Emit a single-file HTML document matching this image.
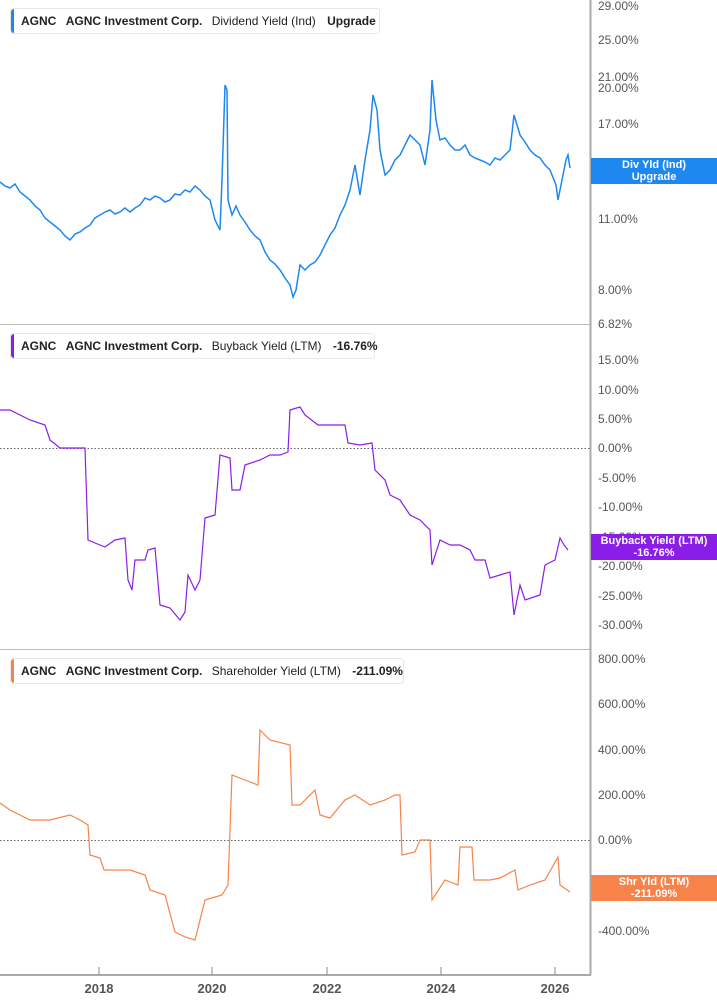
<!DOCTYPE html>
<html><head><meta charset="utf-8"><style>
body{margin:0;background:#fff;width:717px;height:1005px;overflow:hidden;font-family:"Liberation Sans",sans-serif}
svg text{font-family:"Liberation Sans",sans-serif}
.ax{font-size:12px;fill:#555}
.lg{position:absolute;left:10px;height:24px;background:#fff;border:1px solid #e8e8e8;border-radius:3px;font-size:12px;line-height:24px;color:#222;padding-left:10px;white-space:nowrap}
.lg i{position:absolute;left:0;top:0;bottom:0;width:3px;border-radius:3px 0 0 3px}
.lg b{margin-right:6px}
.lg span{margin-right:8px}
.tag{position:absolute;left:591px;width:126px;height:26px;color:#fff;font-size:11px;font-weight:bold;text-align:center;line-height:12px;padding-top:1px;box-sizing:border-box}
</style></head><body>
<svg width="717" height="1005" style="position:absolute;left:0;top:0">
<g stroke="#bbb" stroke-width="1">
<line x1="0" y1="324.5" x2="590" y2="324.5"/>
<line x1="0" y1="649.5" x2="590" y2="649.5"/>
</g>
<line x1="590.5" y1="0" x2="590.5" y2="975" stroke="#aaa" stroke-width="2"/>
<line x1="0" y1="975" x2="591" y2="975" stroke="#aaa" stroke-width="2"/>
<g stroke="#666" stroke-dasharray="1.5,2"><line x1="0" y1="448.5" x2="590" y2="448.5"/><line x1="0" y1="840.5" x2="590" y2="840.5"/></g>
<g stroke="#888"><line x1="99" y1="967" x2="99" y2="975"/><line x1="212" y1="967" x2="212" y2="975"/><line x1="327" y1="967" x2="327" y2="975"/><line x1="441" y1="967" x2="441" y2="975"/><line x1="555" y1="967" x2="555" y2="975"/></g>
<g class="ax" text-anchor="middle" style="font-size:13px;font-weight:bold">
<text x="99" y="993">2018</text><text x="212" y="993">2020</text><text x="327" y="993">2022</text><text x="441" y="993">2024</text><text x="555" y="993">2026</text></g>
<g class="ax">
<text x="598" y="10">29.00%</text><text x="598" y="44">25.00%</text><text x="598" y="81">21.00%</text><text x="598" y="92">20.00%</text><text x="598" y="128">17.00%</text><text x="598" y="171">14.00%</text><text x="598" y="223">11.00%</text><text x="598" y="294">8.00%</text><text x="598" y="328">6.82%</text>
<text x="598" y="364">15.00%</text><text x="598" y="394">10.00%</text><text x="598" y="423">5.00%</text><text x="598" y="452">0.00%</text><text x="598" y="482">-5.00%</text><text x="598" y="511">-10.00%</text><text x="598" y="541">-15.00%</text><text x="598" y="570">-20.00%</text><text x="598" y="600">-25.00%</text><text x="598" y="629">-30.00%</text>
<text x="598" y="663">800.00%</text><text x="598" y="708">600.00%</text><text x="598" y="754">400.00%</text><text x="598" y="799">200.00%</text><text x="598" y="844">0.00%</text><text x="598" y="890">-200.00%</text><text x="598" y="935">-400.00%</text>
</g>
<polyline fill="none" stroke="#1e88f0" stroke-width="1.5" points="0,182 5,186 10,188 15,184 20,192 25,196 30,200 35,206 40,210 45,218 50,222 55,226 60,230 65,236 70,240 75,234 80,232 85,228 90,225 95,218 100,215 105,212 110,210 115,214 120,212 125,208 130,212 135,208 140,205 145,198 150,200 155,196 160,198 165,202 170,200 175,194 180,195 185,190 190,192 195,186 200,190 205,196 210,200 215,220 220,230 222,180 225,85 227,90 228,200 232,215 236,206 240,215 245,222 250,230 255,236 260,240 265,252 270,260 275,264 280,270 285,278 290,285 293,297 296,290 300,265 305,270 310,265 315,262 320,255 325,245 330,235 335,228 340,215 345,205 350,190 355,165 360,195 365,160 370,130 373,95 377,110 380,150 385,175 390,170 395,160 400,155 405,145 410,135 415,140 420,145 425,165 430,130 432,80 436,120 440,140 445,138 450,145 455,150 460,150 465,145 470,155 475,158 480,160 485,162 490,165 495,158 500,160 505,155 510,150 514,115 520,135 525,142 530,150 535,155 540,158 545,165 550,170 556,185 558,200 562,180 566,160 568,155 570,168"/>
<polyline fill="none" stroke="#8a1ee8" stroke-width="1.2" points="0,410 10,410 20,415 30,420 45,425 50,440 60,448 85,448 88,540 95,543 105,547 115,540 125,538 128,580 132,590 135,560 145,560 148,550 155,548 160,605 170,608 180,620 185,612 188,575 195,590 200,580 205,518 215,515 220,455 230,458 232,490 240,490 245,465 260,460 270,455 280,455 288,452 290,410 300,407 305,415 318,425 330,425 345,425 348,443 360,445 372,443 375,470 385,480 390,495 400,500 410,515 420,520 430,530 432,565 440,540 450,545 460,545 470,550 475,560 485,560 490,578 500,575 510,572 514,615 520,585 525,600 540,595 545,565 555,560 560,538 564,545 568,550"/>
<polyline fill="none" stroke="#f7834a" stroke-width="1.2" points="0,803 10,810 30,820 50,820 70,815 80,820 88,825 90,855 100,858 104,870 130,870 145,875 150,890 165,895 175,932 185,937 195,940 205,900 222,895 228,885 232,775 245,780 258,785 260,730 270,740 290,745 292,805 300,805 315,790 320,815 330,818 345,800 355,795 370,805 385,800 395,795 400,795 402,855 415,852 420,840 430,840 432,900 445,880 458,885 460,847 472,847 474,880 490,880 500,878 515,870 518,890 530,885 545,880 558,857 560,885 570,892"/>
</svg>
<div class="lg" style="top:8px;width:358px"><i style="background:#1e88f0"></i><b>AGNC</b> <b>AGNC Investment Corp.</b> <span>Dividend Yield (Ind)</span> <b>Upgrade</b></div>
<div class="lg" style="top:333px;width:353px"><i style="background:#8a1ee8"></i><b>AGNC</b> <b>AGNC Investment Corp.</b> <span>Buyback Yield (LTM)</span> <b>-16.76%</b></div>
<div class="lg" style="top:658px;width:382px"><i style="background:#f7834a"></i><b>AGNC</b> <b>AGNC Investment Corp.</b> <span>Shareholder Yield (LTM)</span> <b>-211.09%</b></div>
<div class="tag" style="top:158px;background:#1e88f0">Div Yld (Ind)<br>Upgrade</div>
<div class="tag" style="top:534px;background:#8a1ee8">Buyback Yield (LTM)<br>-16.76%</div>
<div class="tag" style="top:875px;background:#f7834a">Shr Yld (LTM)<br>-211.09%</div>
</body></html>
